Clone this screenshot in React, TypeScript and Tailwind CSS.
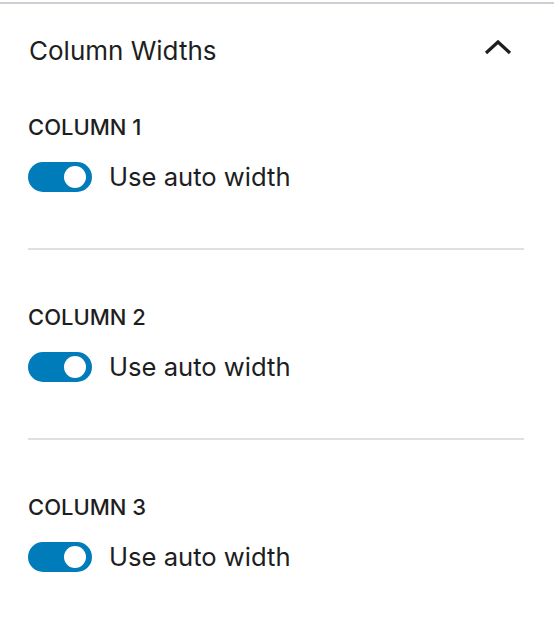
import React from "react";

function Toggle() {
  return (
    <div className="flex items-center h-[30px]">
      <div className="relative w-[64px] h-[30px] rounded-full bg-[#007cba] shrink-0">
        <div className="absolute right-[6px] top-[4px] w-[22px] h-[22px] rounded-full bg-white" />
      </div>
      <span className="ml-[17px] text-[25.6px] leading-[30px] text-[#1e1e1e]">Use auto width</span>
    </div>
  );
}

function Section({ n, last }: { n: number; last?: boolean }) {
  return (
    <div className={"pt-[54px] " + (last ? "" : "pb-[56px] border-b-2 border-[#e0e0e0]")}>
      <div className="text-[22px] leading-[26px] font-medium uppercase text-[#1e1e1e]">Column {n}</div>
      <div className="mt-[22px]">
        <Toggle />
      </div>
    </div>
  );
}

export default function App() {
  return (
    <div
      className="w-[554px] h-[624px] bg-white overflow-hidden"
      style={{ fontFamily: "Inter, 'Noto Sans', sans-serif" }}
    >
      <div className="mt-[2px] border-t-2 border-[#ccd0d4]" />
      <div className="h-[92px] flex items-center justify-between pl-[29px] pr-[42px]">
        <span className="text-[26px] text-[#1e1e1e]">Column Widths</span>
        <svg width="28" height="16" viewBox="0 0 28 16" className="mt-[-6px]">
          <path d="M2 14 L14 3 L26 14" fill="none" stroke="#1e1e1e" strokeWidth="3.2" />
        </svg>
      </div>
      <div className="pl-[28px] pr-[30px] -mt-[36px]">
        <Section n={1} />
        <Section n={2} />
        <Section n={3} last />
      </div>
    </div>
  );
}
